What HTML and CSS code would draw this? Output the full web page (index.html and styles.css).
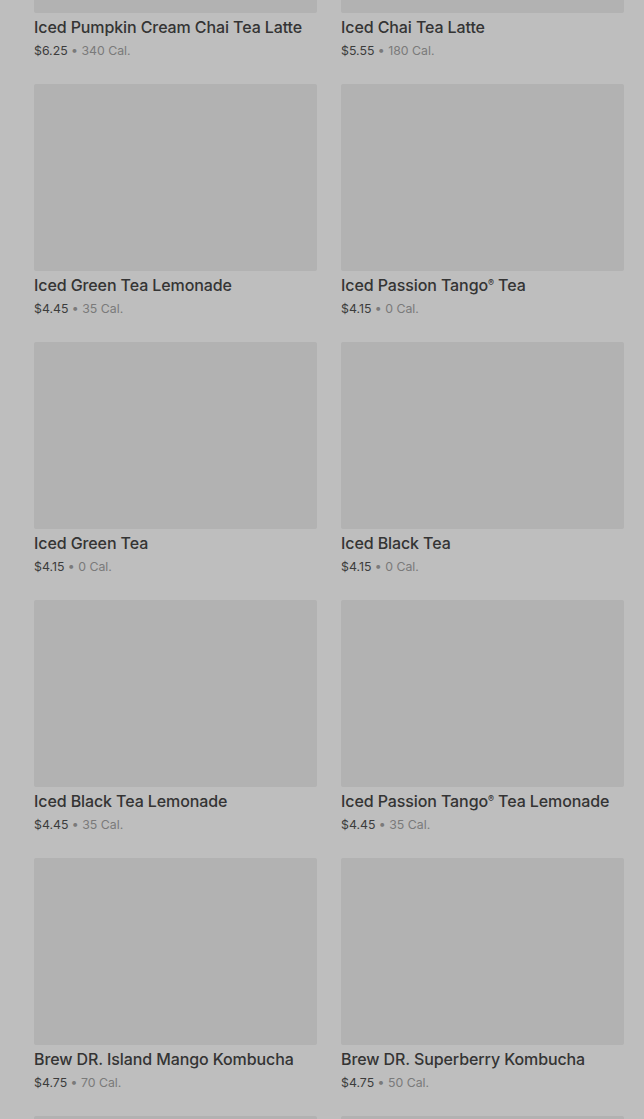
FILE: index.html
```html
<!DOCTYPE html>
<html>
<head>
<meta charset="utf-8">
<link rel="stylesheet" href="styles.css">
</head>
<body>
<div class="page">
<div class="grid">
  <div class="card"><div class="img"></div><div class="title">Iced Pumpkin Cream Chai Tea Latte</div><div class="meta"><span class="price">$6.25</span> <span class="cal">• 340 Cal.</span></div></div>
  <div class="card"><div class="img"></div><div class="title">Iced Chai Tea Latte</div><div class="meta"><span class="price">$5.55</span> <span class="cal">• 180 Cal.</span></div></div>
  <div class="card"><div class="img"></div><div class="title">Iced Green Tea Lemonade</div><div class="meta"><span class="price">$4.45</span> <span class="cal">• 35 Cal.</span></div></div>
  <div class="card"><div class="img"></div><div class="title">Iced Passion Tango<span class="reg">®</span> Tea</div><div class="meta"><span class="price">$4.15</span> <span class="cal">• 0 Cal.</span></div></div>
  <div class="card"><div class="img"></div><div class="title">Iced Green Tea</div><div class="meta"><span class="price">$4.15</span> <span class="cal">• 0 Cal.</span></div></div>
  <div class="card"><div class="img"></div><div class="title">Iced Black Tea</div><div class="meta"><span class="price">$4.15</span> <span class="cal">• 0 Cal.</span></div></div>
  <div class="card"><div class="img"></div><div class="title">Iced Black Tea Lemonade</div><div class="meta"><span class="price">$4.45</span> <span class="cal">• 35 Cal.</span></div></div>
  <div class="card"><div class="img"></div><div class="title">Iced Passion Tango<span class="reg">®</span> Tea Lemonade</div><div class="meta"><span class="price">$4.45</span> <span class="cal">• 35 Cal.</span></div></div>
  <div class="card"><div class="img"></div><div class="title">Brew DR. Island Mango Kombucha</div><div class="meta"><span class="price">$4.75</span> <span class="cal">• 70 Cal.</span></div></div>
  <div class="card"><div class="img"></div><div class="title">Brew DR. Superberry Kombucha</div><div class="meta"><span class="price">$4.75</span> <span class="cal">• 50 Cal.</span></div></div>
  <div class="card"><div class="img"></div></div>
  <div class="card"><div class="img"></div></div>
</div>
</div>
</body>
</html>
```
FILE: styles.css
```css
html, body {
  margin: 0;
  padding: 0;
  background: #bebebe;
}
body {
  font-family: Inter, "Noto Sans", sans-serif;
}
.page {
  height: 1119px;
  overflow: hidden;
}
.grid {
  display: grid;
  grid-template-columns: 283px 283px;
  column-gap: 24px;
  row-gap: 22px;
  padding: 0 20px 0 34px;
  margin-top: -174px;
}
.card {
  display: flex;
  flex-direction: column;
  height: 236px;
}
.img {
  height: 187px;
  background: #b2b2b2;
  border-radius: 2px;
  flex: none;
}
.title {
  margin-top: 3px;
  font-size: 16px;
  line-height: 22px;
  font-weight: 500;
  color: #343434;
  white-space: nowrap;
  letter-spacing: -0.1px;
}
.reg {
  font-size: 9px;
  vertical-align: 5px;
  line-height: 0;
}
.meta {
  margin-top: 3px;
  font-size: 12.3px;
  line-height: 20px;
  white-space: nowrap;
}
.price {
  color: #3c3c3c;
}
.cal {
  color: #7a7a7a;
}
```
